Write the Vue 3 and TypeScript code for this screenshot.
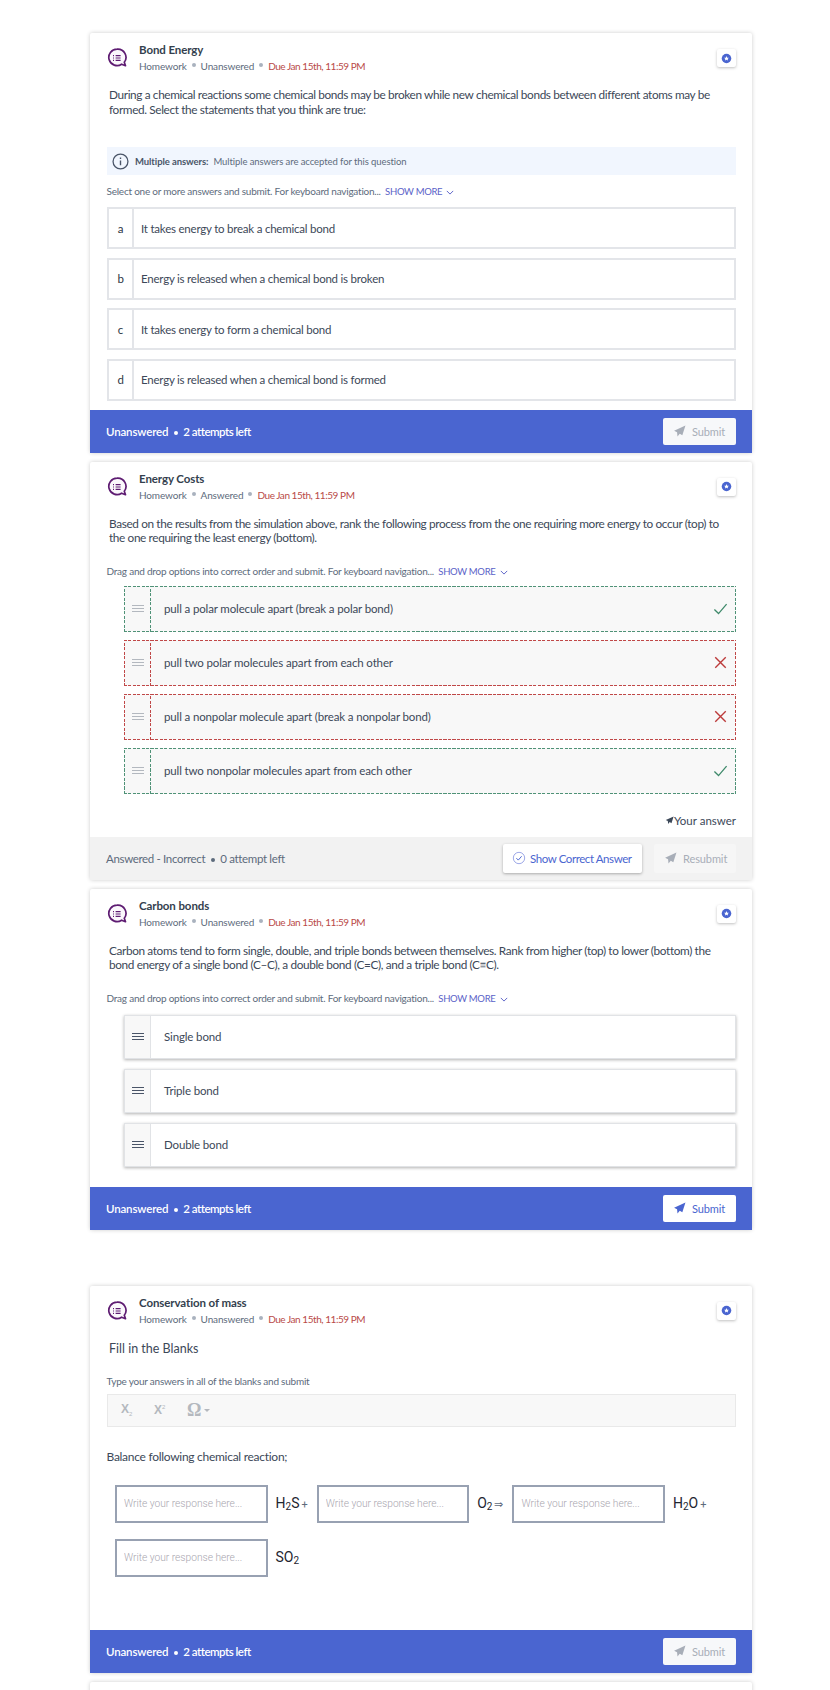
<script setup lang="ts">
type Mark = 'ok' | 'bad'

const choices = [
  { key: 'a', text: 'It takes energy to break a chemical bond' },
  { key: 'b', text: 'Energy is released when a chemical bond is broken' },
  { key: 'c', text: 'It takes energy to form a chemical bond' },
  { key: 'd', text: 'Energy is released when a chemical bond is formed' },
]

const marked: { text: string; mark: Mark }[] = [
  { text: 'pull a polar molecule apart (break a polar bond)', mark: 'ok' },
  { text: 'pull two polar molecules apart from each other', mark: 'bad' },
  { text: 'pull a nonpolar molecule apart (break a nonpolar bond)', mark: 'bad' },
  { text: 'pull two nonpolar molecules apart from each other', mark: 'ok' },
]

const bonds = ['Single bond', 'Triple bond', 'Double bond']
const planePath = 'M23 1 2 10.5l5.5 3 .8 7.5 4.2-4.8 4.7 2.8z'
const placeholder = 'Write your response here...'
</script>

<template>
  <div class="page">
    <!-- bond energy -->
    <section class="card">
      <header class="head">
        <svg class="q-icon" viewBox="0 0 20 20">
          <path d="M10 1.2a8.2 8.2 0 1 0 4.6 15l3.9 1.5-1.2-3.4A8.2 8.2 0 0 0 10 1.2z" fill="#fbf8fc" stroke="#5e1c72" stroke-width="1.7" stroke-linejoin="round" />
          <path d="M8.6 7.7h5M8.6 10h5M8.6 12.3h5M6 7.7h1M6 10h1M6 12.3h1" stroke="#5e1c72" stroke-width="1.2" />
        </svg>
        <div class="head-text">
          <div class="title">Bond Energy</div>
          <div class="meta">Homework<i />Unanswered<i /><span class="due">Due Jan 15th, 11:59 PM</span></div>
        </div>
        <button class="flag"><svg viewBox="0 0 12 12"><circle cx="6" cy="6" r="5.2" fill="#4a65d0" /><path d="m6 3.4.8 1.7 1.8.2-1.3 1.2.4 1.8L6 7.4l-1.7.9.4-1.8-1.3-1.2 1.8-.2z" fill="#fff" /></svg></button>
      </header>
      <p class="stem stem-first">During a chemical reactions some chemical bonds may be broken while new chemical bonds between different atoms may be formed. Select the statements that you think are true:</p>
      <div class="info">
        <svg viewBox="0 0 16 16" class="info-icon"><circle cx="8" cy="8" r="7" fill="none" stroke="#4a5568" stroke-width="1.2" /><path d="M8 7v4.6M8 4.2v1.5" stroke="#4a5568" stroke-width="1.3" /></svg>
        <b>Multiple answers:</b>
        <span>Multiple answers are accepted for this question</span>
      </div>
      <p class="hint hint-tight">Select one or more answers and submit. For keyboard navigation... <a class="more">SHOW MORE <svg viewBox="0 0 10 6"><path d="m1 1 4 4 4-4" fill="none" stroke="#5a62c8" stroke-width="1.2" /></svg></a></p>
      <ul class="choices">
        <li v-for="c in choices" :key="c.key" class="choice">
          <span class="choice-key">{{ c.key }}</span>
          <span class="choice-text">{{ c.text }}</span>
        </li>
      </ul>
      <footer class="foot foot-blue">
        <span>Unanswered<i /><em>2 attempts left</em></span>
        <button class="btn btn-off"><svg viewBox="0 0 24 24"><path :d="planePath" /></svg>Submit</button>
      </footer>
    </section>

    <!-- energy costs -->
    <section class="card">
      <header class="head">
        <svg class="q-icon" viewBox="0 0 20 20">
          <path d="M10 1.2a8.2 8.2 0 1 0 4.6 15l3.9 1.5-1.2-3.4A8.2 8.2 0 0 0 10 1.2z" fill="#fbf8fc" stroke="#5e1c72" stroke-width="1.7" stroke-linejoin="round" />
          <path d="M8.6 7.7h5M8.6 10h5M8.6 12.3h5M6 7.7h1M6 10h1M6 12.3h1" stroke="#5e1c72" stroke-width="1.2" />
        </svg>
        <div class="head-text">
          <div class="title">Energy Costs</div>
          <div class="meta">Homework<i />Answered<i /><span class="due">Due Jan 15th, 11:59 PM</span></div>
        </div>
        <button class="flag"><svg viewBox="0 0 12 12"><circle cx="6" cy="6" r="5.2" fill="#4a65d0" /><path d="m6 3.4.8 1.7 1.8.2-1.3 1.2.4 1.8L6 7.4l-1.7.9.4-1.8-1.3-1.2 1.8-.2z" fill="#fff" /></svg></button>
      </header>
      <p class="stem">Based on the results from the simulation above, rank the following process from the one requiring more energy to occur (top) to the one requiring the least energy (bottom).</p>
      <p class="hint">Drag and drop options into correct order and submit. For keyboard navigation... <a class="more">SHOW MORE <svg viewBox="0 0 10 6"><path d="m1 1 4 4 4-4" fill="none" stroke="#5a62c8" stroke-width="1.2" /></svg></a></p>
      <ul class="rank rank-marked">
        <li v-for="m in marked" :key="m.text" class="rank-row" :class="m.mark">
          <span class="grip"><u /><u /><u /></span>
          <span class="rank-text">{{ m.text }}</span>
          <svg v-if="m.mark === 'ok'" class="mark" viewBox="0 0 16 16"><path d="m1.5 9 4.4 4.4L14.5 3.4" fill="none" stroke="#3f8a6b" stroke-width="1.4" /></svg>
          <svg v-else class="mark" viewBox="0 0 16 16"><path d="m2.4 2.4 11.2 11.2M13.6 2.4 2.4 13.6" fill="none" stroke="#bc3a3a" stroke-width="1.5" /></svg>
        </li>
      </ul>
      <div class="yours"><svg viewBox="0 0 24 24"><path :d="planePath" /></svg>Your answer</div>
      <footer class="foot foot-grey">
        <span>Answered - Incorrect<i />0 attempt left</span>
        <div class="foot-btns">
          <button class="btn btn-reveal"><svg viewBox="0 0 16 16"><circle cx="8" cy="8" r="6.5" fill="none" stroke="#8f9be4" stroke-width="1" /><path d="m5 8.2 2.2 2.2L11 6" fill="none" stroke="#4a65d0" stroke-width="1.1" /></svg>Show Correct Answer</button>
          <button class="btn btn-off btn-resubmit"><svg viewBox="0 0 24 24"><path :d="planePath" /></svg>Resubmit</button>
        </div>
      </footer>
    </section>

    <!-- carbon bonds -->
    <section class="card card-spaced">
      <header class="head">
        <svg class="q-icon" viewBox="0 0 20 20">
          <path d="M10 1.2a8.2 8.2 0 1 0 4.6 15l3.9 1.5-1.2-3.4A8.2 8.2 0 0 0 10 1.2z" fill="#fbf8fc" stroke="#5e1c72" stroke-width="1.7" stroke-linejoin="round" />
          <path d="M8.6 7.7h5M8.6 10h5M8.6 12.3h5M6 7.7h1M6 10h1M6 12.3h1" stroke="#5e1c72" stroke-width="1.2" />
        </svg>
        <div class="head-text">
          <div class="title">Carbon bonds</div>
          <div class="meta">Homework<i />Unanswered<i /><span class="due">Due Jan 15th, 11:59 PM</span></div>
        </div>
        <button class="flag"><svg viewBox="0 0 12 12"><circle cx="6" cy="6" r="5.2" fill="#4a65d0" /><path d="m6 3.4.8 1.7 1.8.2-1.3 1.2.4 1.8L6 7.4l-1.7.9.4-1.8-1.3-1.2 1.8-.2z" fill="#fff" /></svg></button>
      </header>
      <p class="stem">Carbon atoms tend to form single, double, and triple bonds between themselves. Rank from higher (top) to lower (bottom) the bond energy of a single bond (C–C), a double bond (C=C), and a triple bond (C≡C).</p>
      <p class="hint">Drag and drop options into correct order and submit. For keyboard navigation... <a class="more">SHOW MORE <svg viewBox="0 0 10 6"><path d="m1 1 4 4 4-4" fill="none" stroke="#5a62c8" stroke-width="1.2" /></svg></a></p>
      <ul class="rank rank-free">
        <li v-for="b in bonds" :key="b" class="rank-row free">
          <span class="grip"><u /><u /><u /></span>
          <span class="rank-text">{{ b }}</span>
        </li>
      </ul>
      <footer class="foot foot-blue">
        <span>Unanswered<i /><em>2 attempts left</em></span>
        <button class="btn btn-on"><svg viewBox="0 0 24 24"><path :d="planePath" /></svg>Submit</button>
      </footer>
    </section>

    <!-- conservation of mass -->
    <section class="card">
      <header class="head">
        <svg class="q-icon" viewBox="0 0 20 20">
          <path d="M10 1.2a8.2 8.2 0 1 0 4.6 15l3.9 1.5-1.2-3.4A8.2 8.2 0 0 0 10 1.2z" fill="#fbf8fc" stroke="#5e1c72" stroke-width="1.7" stroke-linejoin="round" />
          <path d="M8.6 7.7h5M8.6 10h5M8.6 12.3h5M6 7.7h1M6 10h1M6 12.3h1" stroke="#5e1c72" stroke-width="1.2" />
        </svg>
        <div class="head-text">
          <div class="title">Conservation of mass</div>
          <div class="meta">Homework<i />Unanswered<i /><span class="due">Due Jan 15th, 11:59 PM</span></div>
        </div>
        <button class="flag"><svg viewBox="0 0 12 12"><circle cx="6" cy="6" r="5.2" fill="#4a65d0" /><path d="m6 3.4.8 1.7 1.8.2-1.3 1.2.4 1.8L6 7.4l-1.7.9.4-1.8-1.3-1.2 1.8-.2z" fill="#fff" /></svg></button>
      </header>
      <p class="stem stem-blank">Fill in the Blanks</p>
      <p class="hint hint-blank">Type your answers in all of the blanks and submit</p>
      <div class="toolbar">
        <span class="tool">X<sub>2</sub></span>
        <span class="tool tool-sup">X<sup>2</sup></span>
        <span class="tool tool-omega">Ω<em /></span>
      </div>
      <p class="balance">Balance following chemical reaction;</p>
      <div class="blanks">
        <div class="blank"><input :placeholder="placeholder" /><span class="chem">H<sub>2</sub>S<small>+</small></span></div>
        <div class="blank"><input :placeholder="placeholder" /><span class="chem">O<sub>2</sub><small>⇒</small></span></div>
        <div class="blank"><input :placeholder="placeholder" /><span class="chem">H<sub>2</sub>O<small>+</small></span></div>
        <div class="blank"><input :placeholder="placeholder" /><span class="chem">SO<sub>2</sub></span></div>
      </div>
      <footer class="foot foot-blue">
        <span>Unanswered<i /><em>2 attempts left</em></span>
        <button class="btn btn-off"><svg viewBox="0 0 24 24"><path :d="planePath" /></svg>Submit</button>
      </footer>
    </section>

    <section class="card card-next" />
  </div>
</template>

<style>
html,
body {
  background: #fff;
}
</style>

<style scoped>
.page {
  width: 830px;
  height: 1690px;
  overflow: hidden;
  box-sizing: border-box;
  padding: 33px 78px 0 90px;
  font-family: Lato, "Noto Sans", sans-serif;
  color: #3c4858;
}
.card {
  background: #fff;
  margin-bottom: 9px;
  box-shadow: 0 0 4px rgba(0, 0, 0, 0.2);
  border-radius: 2px;
}
.card-spaced {
  margin-bottom: 56px;
}
.card-next {
  height: 30px;
}
.head {
  display: flex;
  align-items: flex-start;
  padding: 9px 16px 0 17px;
  height: 41px;
  box-sizing: border-box;
}
.q-icon {
  width: 20px;
  height: 20px;
  margin-top: 6px;
  flex: none;
}
.head-text {
  margin-left: 12px;
  flex: 1;
}
.title {
  font-size: 11.5px;
  font-weight: 700;
  line-height: 16px;
  letter-spacing: -0.1px;
  color: #343f4e;
}
.meta {
  font-size: 10px;
  line-height: 16px;
  letter-spacing: -0.15px;
  color: #5d6b7c;
  display: flex;
  align-items: center;
}
.meta i {
  width: 4px;
  height: 4px;
  margin: 0 5px 2px;
  border-radius: 50%;
  background: #a9b2be;
}
.due {
  color: #b94a48;
  letter-spacing: -0.45px;
}
.flag {
  width: 19px;
  height: 18px;
  margin-top: 7px;
  padding: 0;
  border: 0;
  background: #fff;
  border-radius: 2px;
  box-shadow: 0 1px 3px rgba(0, 0, 0, 0.25);
  display: flex;
  align-items: center;
  justify-content: center;
}
.flag svg {
  width: 11px;
  height: 11px;
}
.stem {
  margin: 14px 17px 0 19px;
  font-size: 11.8px;
  line-height: 14.5px;
  letter-spacing: -0.37px;
}
.stem-blank {
  font-size: 12.5px;
  line-height: 16px;
  letter-spacing: 0;
}
.info {
  margin: 30px 16px 0 17px;
  height: 28px;
  background: #f1f6fe;
  display: flex;
  align-items: center;
  font-size: 9.5px;
  color: #5d6b7c;
  letter-spacing: -0.08px;
}
.info-icon {
  width: 17px;
  height: 17px;
  margin: 0 6px 0 5px;
}
.info b {
  margin-right: 5px;
  color: #4a5568;
}
.hint {
  margin: 17px 16px 0 16.5px;
  height: 16px;
  font-size: 10px;
  line-height: 16px;
  letter-spacing: -0.23px;
  color: #5d6b7c;
}
.hint-tight {
  margin-top: 8px;
}
.hint-blank {
  margin-top: 16px;
}
.more {
  color: #5a62c8;
  margin-left: 2px;
  font-size: 9.5px;
  letter-spacing: -0.3px;
}
.more svg {
  width: 8px;
  height: 5px;
  margin-left: 2px;
}
.choices,
.rank {
  list-style: none;
  margin: 0;
}
.choices {
  padding: 8px 16px 9px 17px;
  display: flex;
  flex-direction: column;
  gap: 8.5px;
}
.choice {
  height: 42px;
  box-sizing: border-box;
  border: 2px solid #e3e5e9;
  display: flex;
  align-items: center;
  font-size: 11.5px;
  letter-spacing: -0.22px;
}
.choice-key {
  width: 23px;
  height: 100%;
  border-right: 2px solid #e3e5e9;
  display: flex;
  align-items: center;
  justify-content: center;
  color: #2c3644;
  flex: none;
}
.choice-text {
  margin-left: 7px;
}
.rank {
  padding: 7px 16px 0 34px;
  display: flex;
  flex-direction: column;
  gap: 8px;
}
.rank-free {
  padding-top: 9px;
  padding-bottom: 20px;
  gap: 10px;
}
.rank-row {
  height: 46px;
  box-sizing: border-box;
  display: flex;
  align-items: center;
  background-color: #f8f8f8;
  background-image:
    repeating-linear-gradient(90deg, var(--dash) 0 3px, transparent 3px 4.5px),
    repeating-linear-gradient(90deg, var(--dash) 0 3px, transparent 3px 4.5px),
    repeating-linear-gradient(0deg, var(--dash) 0 3px, transparent 3px 4.5px),
    repeating-linear-gradient(0deg, var(--dash) 0 3px, transparent 3px 4.5px);
  background-size: 100% 1px, 100% 1px, 1px 100%, 1px 100%;
  background-position: top, bottom, left, right;
  background-repeat: no-repeat;
  font-size: 11.5px;
  letter-spacing: -0.14px;
}
.rank-row.ok {
  --dash: #4f9277;
}
.rank-row.bad {
  --dash: #c04848;
}
.rank-row.free {
  height: 44px;
  background: #fff;
  border: 1px solid #e1e3e6;
  box-shadow: 0 1px 3px rgba(0, 0, 0, 0.3);
}
.grip {
  width: 27px;
  height: 100%;
  box-sizing: border-box;
  background-image: repeating-linear-gradient(0deg, var(--dash) 0 3px, transparent 3px 4.5px);
  background-size: 1px 100%;
  background-position: right;
  background-repeat: no-repeat;
  display: flex;
  flex-direction: column;
  justify-content: center;
  align-items: center;
  gap: 1.5px;
  flex: none;
}
.grip u {
  width: 12px;
  height: 1.5px;
  background: #b3b8bf;
}
.free .grip {
  width: 26px;
  background: #f8f8f8;
  border-right: 1px solid #e1e3e6;
}
.free .grip u {
  background: #4a5568;
}
.rank-text {
  margin-left: 13px;
  flex: 1;
}
.mark {
  width: 15px;
  height: 15px;
  margin-right: 8px;
}
.yours {
  margin: 19px 16px 8px 0;
  font-size: 11.5px;
  line-height: 16px;
  display: flex;
  justify-content: flex-end;
  align-items: center;
}
.yours svg {
  width: 9px;
  height: 9px;
  fill: #3c4858;
}
.foot {
  height: 43px;
  box-sizing: border-box;
  padding: 0 16px;
  display: flex;
  align-items: center;
  justify-content: space-between;
  font-size: 11.5px;
}
.foot i {
  display: inline-block;
  width: 4px;
  height: 4px;
  border-radius: 50%;
  background: currentColor;
  margin: 0 5px 1px 6px;
}
.foot em {
  font-style: normal;
  letter-spacing: -0.5px;
}
.foot-blue {
  background: #4a65d0;
  color: #fff;
  font-weight: 600;
  letter-spacing: -0.15px;
}
.foot-grey {
  background: #f2f2f2;
  color: #5d6b7c;
  letter-spacing: -0.34px;
}
.foot-btns {
  display: flex;
  gap: 12px;
}
.btn {
  height: 27px;
  border: 0;
  border-radius: 2px;
  padding: 0 10px;
  display: flex;
  align-items: center;
  gap: 6px;
  font-family: inherit;
  font-size: 11px;
  letter-spacing: -0.1px;
  box-sizing: border-box;
  white-space: nowrap;
}
.btn svg {
  width: 13px;
  height: 13px;
  flex: none;
}
.btn-off {
  width: 73px;
  background: #f7f8fa;
  color: #a8aeb8;
}
.btn-off svg {
  fill: #a8aeb8;
}
.btn-on {
  width: 73px;
  background: #fff;
  color: #4a65d0;
}
.btn-on svg {
  fill: #4a65d0;
}
.btn-reveal {
  width: 139px;
  height: 29px;
  padding: 0 9px;
  gap: 4px;
  background: #fff;
  color: #4a65d0;
  box-shadow: 0 1px 3px rgba(0, 0, 0, 0.3);
  font-size: 11.5px;
  letter-spacing: -0.42px;
}
.btn-reveal svg {
  width: 14px;
  height: 14px;
}
.btn-resubmit {
  width: 82px;
  height: 29px;
  background: #f6f6f6;
}
.toolbar {
  margin: 5px 16px 0 17px;
  height: 33px;
  box-sizing: border-box;
  background: #f8f8f8;
  border: 1px solid #e9e9e9;
  display: flex;
  align-items: center;
  color: #b4b8be;
  font-family: "Liberation Sans", sans-serif;
  font-weight: 700;
  font-size: 12px;
}
.tool {
  margin-left: 13px;
  width: 20px;
}
.tool-sup {
  margin-left: 13px;
}
.tool-omega {
  margin-left: 13px;
  font-family: "Liberation Serif", serif;
  font-size: 18px;
  display: flex;
  align-items: center;
}
.tool-omega em {
  margin-left: 3px;
  border: 3px solid transparent;
  border-top-color: #b4b8be;
  border-bottom: 0;
}
.tool sub,
.tool sup {
  font-size: 6px;
  font-weight: 400;
}
.balance {
  margin: 22px 16px 0 16.5px;
  font-size: 12px;
  line-height: 16px;
  letter-spacing: -0.28px;
}
.blanks {
  margin: 20px 16px 53px 25px;
  display: flex;
  flex-wrap: wrap;
  column-gap: 9px;
  row-gap: 16px;
}
.blank {
  display: flex;
  align-items: center;
  gap: 8px;
}
.blank input {
  width: 152.5px;
  height: 38px;
  box-sizing: border-box;
  border: 2px solid #98a1b2;
  padding: 0 7px;
  font-family: Roboto, sans-serif;
  font-weight: 300;
  font-size: 10.2px;
  outline: none;
}
.blank input::placeholder {
  color: #a9a6af;
  opacity: 1;
}
.chem {
  font-family: Roboto, sans-serif;
  font-size: 14px;
  color: #1e2530;
  height: 20px;
  line-height: 18px;
  display: inline-block;
}
.chem sub {
  font-size: 10px;
  line-height: 0;
  vertical-align: -2px;
}
.chem small {
  font-size: 11px;
  color: #5d6b7c;
  margin-left: 2px;
}
</style>
